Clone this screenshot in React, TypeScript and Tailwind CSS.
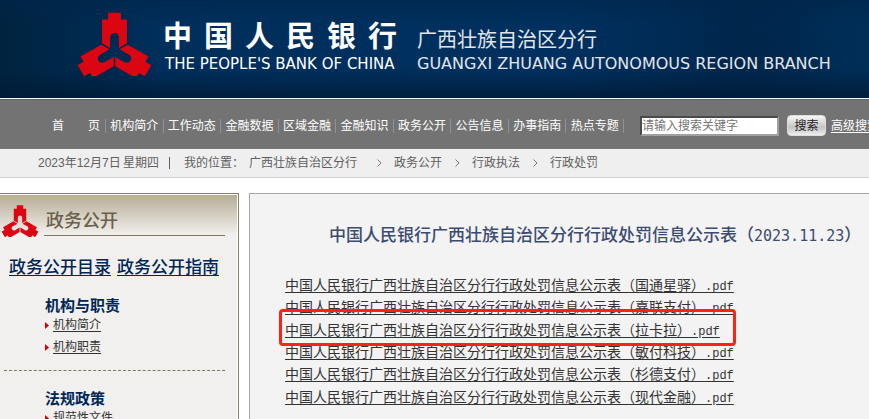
import { clsx } from "clsx";

const navItems = ["机构简介", "工作动态", "金融数据", "区域金融", "金融知识", "政务公开", "公告信息", "办事指南", "热点专题"];

const crumbs = ["政务公开", "行政执法", "行政处罚"];

const files = [
  { name: "国通星驿" },
  { name: "嘉联支付" },
  { name: "拉卡拉", marked: true },
  { name: "敏付科技" },
  { name: "杉德支付" },
  { name: "现代金融" },
];

const menu = [
  { title: "机构与职责", links: ["机构简介", "机构职责"] },
  { title: "法规政策", links: ["规范性文件"] },
];

const petal = "M-19-115H19V-95H37V-24L13-10V-42A13 13 0 0 0-13-42V-10L-37-24V-95H-19Z";

function Emblem({ className }: { className?: string }) {
  return (
    <svg viewBox="-108 -117 216 190" className={className} fill="#dc0512" aria-hidden="true">
      <path d={petal} />
      <path d={petal} transform="rotate(120)" />
      <path d={petal} transform="rotate(240)" />
    </svg>
  );
}

function Header() {
  return (
    <header className="h-[99px] border-b border-white bg-[#00305f] bg-[radial-gradient(ellipse_70px_60px_at_88%_45%,#00254780,transparent),linear-gradient(to_bottom,#00254a99,transparent_25%,transparent_70%,#001a35cc),linear-gradient(to_right,#00233f,#002f5c_18%,#00305f_65%,#00274e_85%,#002e58)] pl-[78px] pt-3">
      <div className="flex items-start">
        <Emblem className="h-[64px] w-[73px] shrink-0 drop-shadow-md" />
        <div className="ml-3 mt-2 w-[240px] shrink-0">
          <div className="flex gap-3 text-[29px] leading-[34px] font-bold text-white">
            {"中国人民银行".split("").map((c) => <span key={c}>{c}</span>)}
          </div>
          <p className="mt-0.5 pl-0.5 font-['DejaVu_Sans'] text-[15px] leading-[16px] whitespace-nowrap text-white">THE PEOPLE'S BANK OF CHINA</p>
        </div>
        <div className="ml-[14px] mt-2 shrink-0 text-[#e2e6ea]">
          <p className="pt-[6px] text-[20px] leading-[28px] whitespace-nowrap">广西壮族自治区分行</p>
          <p className="mt-0.5 font-['DejaVu_Sans'] text-[16px] leading-[16px] whitespace-nowrap">GUANGXI ZHUANG AUTONOMOUS REGION BRANCH</p>
        </div>
      </div>
    </header>
  );
}

function NavBar() {
  return (
    <nav className="flex h-[50px] items-center border-t border-[#5c6670] bg-[#737373] pt-0.5 pl-[52px] whitespace-nowrap text-white">
      <a href="#" className="w-[53px] shrink-0">首{"\u3000\u3000"}页</a>
      <div className="grid w-[519px] shrink-0 grid-cols-9 border-l border-[#8b929c]">
        {navItems.map((item) => (
          <a key={item} href="#" className="border-r border-[#8b929c] text-center leading-[14px]">{item}</a>
        ))}
      </div>
      <form className="ml-4 flex shrink-0 items-center">
        <input
          aria-label="搜索关键字"
          placeholder="请输入搜索关键字"
          className="h-5 w-[139px] border-2 border-t-[#4a4a4a] border-r-[#a0a0a0] border-b-[#a0a0a0] border-l-[#4a4a4a] bg-white text-[12px] placeholder:text-[#757575]"
        />
        <button type="button" className="ml-2 h-[21px] w-[39px] rounded-sm border border-[#dcdcdc] bg-linear-to-b from-[#f6f6f6] via-[#c4c4c4] via-60% to-[#efefef] text-[#222]">搜索</button>
        <a href="#" className="ml-[5px] underline underline-offset-2">高级搜索</a>
      </form>
    </nav>
  );
}

function Breadcrumb() {
  return (
    <div className="flex h-[29px] items-center border-b border-[#cfcfcf] bg-[#efefef] pl-[38px] whitespace-nowrap text-[#5f5f5f]">
      <span className="w-[85px] shrink-0">2023年12月7日</span>
      <span>星期四</span>
      <span className="mx-[10px] h-3 w-px bg-[#5f5f5f]" />
      <span className="ml-1 w-[65px] shrink-0">我的位置：</span>
      <span>广西壮族自治区分行</span>
      {crumbs.map((c, i) => (
        <span key={c} className="flex items-center">
          <svg viewBox="0 0 5 8" className={clsx("mr-3 h-2 w-[5px]", i === 0 ? "ml-5" : "ml-[13px]")} fill="none" stroke="#777">
            <path d="M.5.5 4 4 .5 7.5" />
          </svg>
          {c}
        </span>
      ))}
    </div>
  );
}

function Sidebar() {
  return (
    <aside className="w-[239px] shrink-0 border-t border-r border-[#8a7f62] bg-white pt-px pr-px">
      <div className="h-full bg-[#f2f0ee] bg-linear-to-b from-[#b7ad97] to-[#f2f0ee] to-[40px]">
        <div className="flex pt-[10px]">
          <Emblem className="h-8 w-10 shrink-0" />
          <h2 className="ml-1 mr-3 h-[31px] flex-1 border-b border-[#80765c] pt-0.5 pl-0.5 text-[18px] leading-[28px] font-medium text-[#6b6049]">政务公开</h2>
        </div>
        <div className="mt-[21px] flex gap-[6px] pl-[9px] text-[17px] leading-[20px] font-medium whitespace-nowrap text-[#002657]">
          <a href="#" className="underline underline-offset-2">政务公开目录</a>
          <a href="#" className="underline underline-offset-2">政务公开指南</a>
        </div>
        {menu.map((group) => (
          <section key={group.title} className="mr-3 ml-1 border-b border-dashed border-[#80765c] pt-[19px] pb-3">
            <h3 className="pl-[41px] text-[15px] leading-[17px] font-bold text-[#002657]">{group.title}</h3>
            <ul className="pl-[41px]">
              {group.links.map((link) => (
                <li key={link} className="flex h-[22px] items-center gap-1">
                  <svg viewBox="0 0 4 7" className="h-[7px] w-1" fill="#d4000f"><path d="M0 0 4 3.5 0 7Z" /></svg>
                  <a href="#" className="text-[#333] underline underline-offset-2">{link}</a>
                </li>
              ))}
            </ul>
          </section>
        ))}
      </div>
    </aside>
  );
}

export default function App() {
  return (
    <div lang="zh-CN" className="flex h-screen flex-col overflow-hidden bg-white font-['Liberation_Sans','Noto_Sans_CJK_SC',sans-serif] text-[12px] leading-[16px]">
      <div className="shrink-0">
        <Header />
        <NavBar />
        <Breadcrumb />
      </div>
      <div className="mt-[15px] flex min-h-0 flex-1 gap-[10px]">
        <Sidebar />
        <main className="min-w-0 flex-1 border-t border-l border-[#a6a6a6] bg-[#f3f3f3] pl-[35px]">
          <h1 className="mt-[30px] pl-11 text-[17px] leading-[24px] font-medium whitespace-nowrap text-[#3c4c70]">
            中国人民银行广西壮族自治区分行行政处罚信息公示表（<span className="font-['DejaVu_Sans_Mono'] text-[15px]">2023.11.23</span>）
          </h1>
          <ul className="mt-[26px] grid h-[134px] grid-rows-6 text-[14px] leading-[22px] whitespace-nowrap text-[#333]">
            {files.map((f) => (
              <li key={f.name} className="relative">
                <a href="#" className="underline underline-offset-2">
                  中国人民银行广西壮族自治区分行行政处罚信息公示表（{f.name}）<span className="font-['Liberation_Mono'] text-[12px]">.pdf</span>
                </a>
                {f.marked && <span className="absolute -top-[10px] -left-[6px] z-10 h-[37px] w-[457px] rounded-sm border-3 border-[#fb2314]" />}
              </li>
            ))}
          </ul>
        </main>
      </div>
    </div>
  );
}
